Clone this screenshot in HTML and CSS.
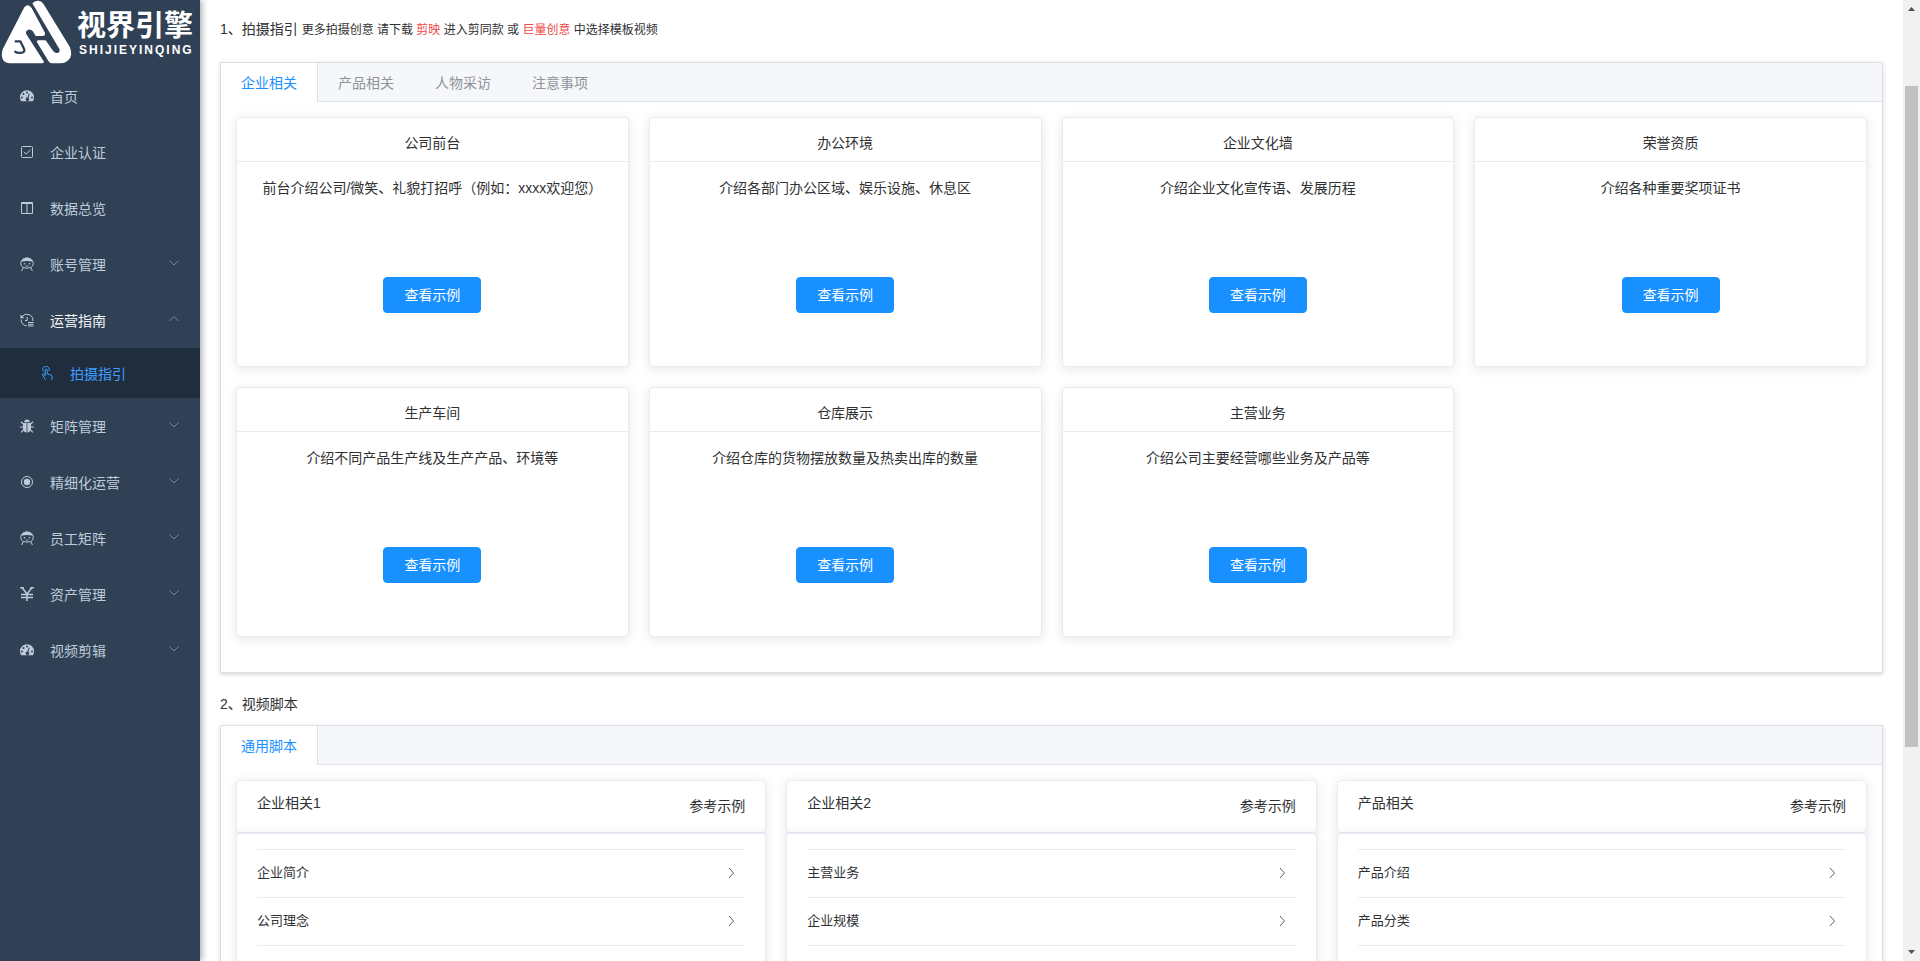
FILE: index.html
```html
<!DOCTYPE html>
<html lang="zh-CN">
<head>
<meta charset="utf-8">
<title>视界引擎</title>
<link rel="stylesheet" href="styles.css">
</head>
<body>
<svg class="sprite" aria-hidden="true">
  <symbol id="i-dash" viewBox="0 0 14 14"><path fill="currentColor" fill-rule="evenodd" d="M7 1.200A7 7 0 0 0 0 8.200c0 1.500.4 2.800 1.100 4h11.800A7.500 7.500 0 0 0 14 8.200 7 7 0 0 0 7 1.200zM2 7.400a1 1 0 1 1 0 2 1 1 0 0 1 0-2zM3.500 4a1 1 0 1 1 0 2 1 1 0 0 1 0-2zM7 2.400a1 1 0 1 1 0 2 1 1 0 0 1 0-2zM12 7.400a1 1 0 1 1 0 2 1 1 0 0 1 0-2zM8.800 4.400l.9.300-1.300 4.200a1.700 1.700 0 1 1-1-.3z"/></symbol>
  <symbol id="i-check" viewBox="0 0 14 14"><g fill="none" stroke="currentColor"><rect x="1.500" y="1.500" width="11" height="11" rx="1"/><path d="M3.800 6.800l2.400 2.400 4.300-4.400"/></g></symbol>
  <symbol id="i-cols" viewBox="0 0 14 14"><path fill="none" stroke="currentColor" d="M1.500 1.500h11v11h-11zM7 2v10M1.500 2.500h11"/></symbol>
  <symbol id="i-face" viewBox="0 0 14 14"><path fill="none" stroke="currentColor" d="M4 10.700C2 10.200.8 8.600.8 6.300.8 3.300 3.400 1 7 1s6.200 2.300 6.200 5.300c0 2.300-1.200 3.900-3.200 4.400-1.900.5-4.100.5-6 0zM3.200 10.700L1.600 14M10.800 10.700l1.600 3.300"/><path fill="currentColor" d="M1.200 4.700C2.200 2.200 4.300.8 7 .8s4.800 1.400 5.800 3.900C9 3.700 5 3.700 1.200 4.700z"/><circle cx="4.500" cy="6.800" r=".8" fill="currentColor"/><circle cx="9.500" cy="6.800" r=".8" fill="currentColor"/><path fill="none" stroke="currentColor" stroke-width=".8" d="M5.500 8.900q1.500.7 3 0"/></symbol>
  <symbol id="i-hist" viewBox="0 0 14 14"><g fill="none" stroke="currentColor"><path d="M2 3.700A6 6 0 0 1 12.800 8M1.100 6.500A6 6 0 0 0 6.700 12.800M7.200 4v3.500H5M8 9.500h5.500M8 11.300h5.500M8 13h5.500"/></g><path fill="currentColor" d="M.5 1.500v3.800h3.800z"/></symbol>
  <symbol id="i-tap" viewBox="0 0 14 14"><path fill="none" stroke="currentColor" d="M3.200 5.300A3.300 3.300 0 1 1 9 5.100M5.200 10V4.200a1 1 0 0 1 2 0V8l4 1q1.300.5 1 2l-.6 2.800M5.200 9.400L3.500 7.800q-1.500 0-.8 1.400l2.800 4.600"/></symbol>
  <symbol id="i-bug" viewBox="0 0 14 14"><path fill="currentColor" d="M4.200 3.200a2.800 2.800 0 0 1 5.600 0zM3 4h3.600v9.500C4.500 13.300 3 12 3 9.500zM11 4H7.400v9.500c2.100-.2 3.600-1.500 3.600-4z"/><path fill="none" stroke="currentColor" stroke-width="1.200" d="M1 2.700l2.700 2.500M13 2.700l-2.700 2.500M0 8h3M14 8h-3M1.200 13.300l2.500-2.600M12.800 13.300l-2.500-2.600"/></symbol>
  <symbol id="i-radio" viewBox="0 0 14 14"><circle cx="7" cy="7" r="5.500" fill="none" stroke="currentColor"/><circle cx="7" cy="7" r="3.200" fill="currentColor"/></symbol>
  <symbol id="i-yen" viewBox="0 0 14 14"><path fill="none" stroke="currentColor" stroke-width="1.500" d="M2 .5L7 7l5-6.500M7 7v7M1 7.500h12M1 10.500h12M.2.700h3.600M10.200.7h3.600"/></symbol>
  <symbol id="i-down" viewBox="0 0 12 12"><path fill="none" stroke="currentColor" d="M1.500 3.500L6 8l4.500-4.500"/></symbol>
  <symbol id="i-up" viewBox="0 0 12 12"><path fill="none" stroke="currentColor" d="M1.500 8L6 3.500 10.500 8"/></symbol>
  <symbol id="i-right" viewBox="0 0 12 12"><path fill="none" stroke="currentColor" d="M4 1l4.500 5L4 11"/></symbol>
</svg>
<div class="app">
  <aside class="sidebar">
    <a class="logo" href="#">
      <svg class="logo-mark" viewBox="0 0 216 192" aria-hidden="true">
        <path fill="#fff" d="M73 22Q84 8 95 24L134 97Q138 107 128 108H107L98 93Q89 84 80 92 76 97 80 104L131 184Q133 190 126 190H28Q-2 186 8 148z"/>
        <path fill="#fff" d="M97 10Q104 1 115 2 125 3 131 13L209 140Q221 168 202 183 194 190 182 190H156Q149 190 145 183L111 127Q109 121 116 121H137L160 154Q167 162 175 158 181 154 178 147z"/>
        <path fill="none" stroke="#304156" stroke-width="7" stroke-linecap="round" stroke-linejoin="round" d="M46 155Q50 160 66 158 76 156 72 146L61 124H47"/>
      </svg>
      <span class="logo-text"><strong>视界引擎</strong><small>SHIJIEYINQING</small></span>
    </a>
    <nav class="menu">
      <a class="item" href="#"><svg class="icon"><use href="#i-dash"/></svg><span>首页</span></a>
      <a class="item" href="#"><svg class="icon"><use href="#i-check"/></svg><span>企业认证</span></a>
      <a class="item" href="#"><svg class="icon"><use href="#i-cols"/></svg><span>数据总览</span></a>
      <a class="item" href="#"><svg class="icon"><use href="#i-face"/></svg><span>账号管理</span><svg class="caret"><use href="#i-down"/></svg></a>
      <a class="item open" href="#"><svg class="icon"><use href="#i-hist"/></svg><span>运营指南</span><svg class="caret"><use href="#i-up"/></svg></a>
      <a class="item sub" href="#"><svg class="icon"><use href="#i-tap"/></svg><span>拍摄指引</span></a>
      <a class="item" href="#"><svg class="icon"><use href="#i-bug"/></svg><span>矩阵管理</span><svg class="caret"><use href="#i-down"/></svg></a>
      <a class="item" href="#"><svg class="icon"><use href="#i-radio"/></svg><span>精细化运营</span><svg class="caret"><use href="#i-down"/></svg></a>
      <a class="item" href="#"><svg class="icon"><use href="#i-face"/></svg><span>员工矩阵</span><svg class="caret"><use href="#i-down"/></svg></a>
      <a class="item" href="#"><svg class="icon"><use href="#i-yen"/></svg><span>资产管理</span><svg class="caret"><use href="#i-down"/></svg></a>
      <a class="item" href="#"><svg class="icon"><use href="#i-dash"/></svg><span>视频剪辑</span><svg class="caret"><use href="#i-down"/></svg></a>
    </nav>
  </aside>
  <main class="main">
    <h2 class="heading first">1、拍摄指引 <small>更多拍摄创意 请下载 <a href="#">剪映</a> 进入剪同款 或 <a href="#">巨量创意</a> 中选择模板视频</small></h2>
    <section class="panel">
      <div class="tabs" role="tablist">
        <button class="tab active" role="tab">企业相关</button>
        <button class="tab" role="tab">产品相关</button>
        <button class="tab" role="tab">人物采访</button>
        <button class="tab" role="tab">注意事项</button>
      </div>
      <div class="grid guides">
        <article class="card guide"><h3>公司前台</h3><p>前台介绍公司/微笑、礼貌打招呼（例如：xxxx欢迎您）</p><button class="btn">查看示例</button></article>
        <article class="card guide"><h3>办公环境</h3><p>介绍各部门办公区域、娱乐设施、休息区</p><button class="btn">查看示例</button></article>
        <article class="card guide"><h3>企业文化墙</h3><p>介绍企业文化宣传语、发展历程</p><button class="btn">查看示例</button></article>
        <article class="card guide"><h3>荣誉资质</h3><p>介绍各种重要奖项证书</p><button class="btn">查看示例</button></article>
        <article class="card guide"><h3>生产车间</h3><p>介绍不同产品生产线及生产产品、环境等</p><button class="btn">查看示例</button></article>
        <article class="card guide"><h3>仓库展示</h3><p>介绍仓库的货物摆放数量及热卖出库的数量</p><button class="btn">查看示例</button></article>
        <article class="card guide"><h3>主营业务</h3><p>介绍公司主要经营哪些业务及产品等</p><button class="btn">查看示例</button></article>
      </div>
    </section>
    <h2 class="heading">2、视频脚本</h2>
    <section class="panel">
      <div class="tabs" role="tablist">
        <button class="tab active" role="tab">通用脚本</button>
      </div>
      <div class="grid scripts">
        <article>
          <header class="card script-head"><h3>企业相关1</h3><a href="#">参考示例</a></header>
          <div class="card script-list">
            <a class="row" href="#"><span>企业简介</span><svg><use href="#i-right"/></svg></a>
            <a class="row" href="#"><span>公司理念</span><svg><use href="#i-right"/></svg></a>
          </div>
        </article>
        <article>
          <header class="card script-head"><h3>企业相关2</h3><a href="#">参考示例</a></header>
          <div class="card script-list">
            <a class="row" href="#"><span>主营业务</span><svg><use href="#i-right"/></svg></a>
            <a class="row" href="#"><span>企业规模</span><svg><use href="#i-right"/></svg></a>
          </div>
        </article>
        <article>
          <header class="card script-head"><h3>产品相关</h3><a href="#">参考示例</a></header>
          <div class="card script-list">
            <a class="row" href="#"><span>产品介绍</span><svg><use href="#i-right"/></svg></a>
            <a class="row" href="#"><span>产品分类</span><svg><use href="#i-right"/></svg></a>
          </div>
        </article>
      </div>
    </section>
  </main>
  <div class="scrollbar" aria-hidden="true">
    <svg viewBox="0 0 17 17"><path fill="#505050" d="M5 11l3.500-4 3.500 4z"/></svg>
    <div class="track"><div class="thumb"></div></div>
    <svg viewBox="0 0 17 17"><path fill="#505050" d="M5 6l3.500 4L12 6z"/></svg>
  </div>
</div>
</body>
</html>
```
FILE: styles.css
```css
* { box-sizing: border-box; }
body {
  margin: 0;
  font: 14px/20px "Liberation Sans", "Noto Sans CJK SC", sans-serif;
  color: #303133;
  background: #fff;
}
a { color: inherit; text-decoration: none; }
h2, h3, p { margin: 0; font-size: 14px; font-weight: 400; }
button { font: inherit; cursor: pointer; }
.sprite { display: none; }
.app { display: flex; height: 100vh; overflow: hidden; }

.sidebar {
  flex: 0 0 200px;
  background: #304156;
  box-shadow: 2px 0 6px rgba(0, 21, 41, .35);
  z-index: 1;
}
.logo { display: flex; align-items: center; gap: 5px; height: 68px; padding-bottom: 4px; color: #fff; }
.logo-mark { width: 72px; height: 64px; }
.logo-text { display: flex; flex-direction: column; gap: 1px; }
.logo-text strong { font-size: 29px; line-height: 34px; font-weight: 700; }
.logo-text small { padding-left: 2px; font-size: 12px; line-height: 12px; font-weight: 700; letter-spacing: 2px; }
.item { display: flex; align-items: center; height: 56px; padding: 0 20px; color: #bfcbd9; }
.item span { padding-top: 2px; }
.icon { width: 14px; height: 14px; margin-right: 16px; }
.caret { width: 12px; height: 12px; margin: 0 0 2px auto; color: #76859a; }
.item.open span { color: #f4f4f5; }
.item.sub { height: 50px; padding-left: 40px; background: #1f2d3d; color: #409eff; }

.main { flex: 1; min-width: 0; padding: 0 20px; overflow: hidden; }
.heading { padding: 21px 0 11px; }
.heading.first { padding: 19px 0 23px; }
.heading small { font-size: 12px; line-height: 18px; }
.heading a { color: #f04848; }
.panel {
  border: 1px solid #dcdfe6;
  background: #fff;
  box-shadow: 0 2px 4px rgba(0, 0, 0, .12), 0 0 6px rgba(0, 0, 0, .04);
}
.tabs { display: flex; background: #f5f7fa; border-bottom: 1px solid #dfe4ed; }
.tab {
  height: 39px;
  margin-bottom: -1px;
  padding: 0 20px;
  border: 0;
  border-right: 1px solid transparent;
  background: none;
  color: #909399;
}
.tab.active { background: #fff; border-right-color: #dcdfe6; color: #1890ff; }
.grid { display: grid; gap: 20px; padding: 15px; }
.guides { grid-template-columns: repeat(4, 1fr); padding-bottom: 35px; }
.scripts { grid-template-columns: repeat(3, 1fr); }
.card {
  border: 1px solid #e6ebf5;
  border-radius: 4px;
  background: #fff;
  box-shadow: 0 2px 12px rgba(0, 0, 0, .1);
}
.guide { display: flex; flex-direction: column; align-items: center; height: 250px; }
.guide h3 { align-self: stretch; padding: 15px 0 8px; text-align: center; border-bottom: 1px solid #e6ebf5; }
.guide p { padding: 16px 20px 0; text-align: center; }
.btn {
  height: 36px;
  margin: auto 0 53px;
  padding: 0 20px;
  border: 1px solid #1890ff;
  border-radius: 4px;
  background: #1890ff;
  color: #fff;
}
.script-head { display: flex; justify-content: space-between; padding: 12px 20px 16px; }
.script-head a { padding-top: 3px; }
.script-list { padding: 15px 20px; height: 200px; }
.row {
  display: flex;
  align-items: center;
  justify-content: space-between;
  height: 48px;
  padding: 0 8px 2px 0;
  border-top: 1px solid #e6ebf5;
  font-size: 13px;
}
.row:last-child { height: 49px; border-bottom: 1px solid #e6ebf5; }
.row svg { width: 12px; height: 12px; color: #606266; }

.scrollbar { display: flex; flex-direction: column; flex: 0 0 17px; background: #f1f1f1; }
.scrollbar svg { width: 17px; height: 17px; }
.track { flex: 1; padding: 69px 2px 0; }
.thumb { height: 77%; background: #c1c1c1; }
```
